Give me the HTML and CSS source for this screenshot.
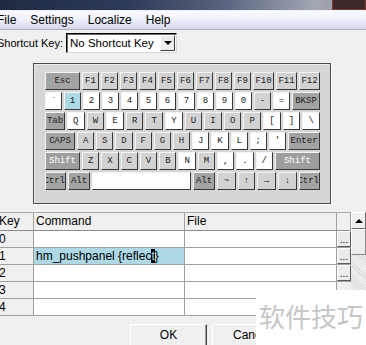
FILE: index.html
```html
<!DOCTYPE html>
<html lang="en">
<head>
  <meta charset="UTF-8">
  <title>Keyboard Mapping</title>
  <link rel="stylesheet" href="styles.css">
</head>
<body>
  <div class="titlebar"><span class="close-box"></span></div>

  <div class="menubar">
    <span class="menu-item first">File</span>
    <span class="menu-item">Settings</span>
    <span class="menu-item">Localize</span>
    <span class="menu-item">Help</span>
  </div>

  <div class="shortcut-row">
    <label class="shortcut-label">Shortcut Key:</label>
    <div class="select">
      <span class="select-text">No Shortcut Key</span>
      <span class="select-btn"><span class="arrow-down"></span></span>
    </div>
  </div>

  <div class="kbd-frame">
    <div class="krow">
      <span class="key dk w35">Esc</span>
      <span class="key lt w17">F1</span>
      <span class="key lt w17">F2</span>
      <span class="key lt w17">F3</span>
      <span class="key lt w17">F4</span>
      <span class="key lt w17">F5</span>
      <span class="key lt w17">F6</span>
      <span class="key lt w17">F7</span>
      <span class="key lt w17">F8</span>
      <span class="key lt w17">F9</span>
      <span class="key lt w21">F10</span>
      <span class="key lt w21">F11</span>
      <span class="key lt w21">F12</span>
    </div>
    <div class="krow">
      <span class="key w17">`</span>
      <span class="key sel w17">1</span>
      <span class="key w17">2</span>
      <span class="key w17">3</span>
      <span class="key w17">4</span>
      <span class="key w17">5</span>
      <span class="key w17">6</span>
      <span class="key w17">7</span>
      <span class="key w17">8</span>
      <span class="key w17">9</span>
      <span class="key w17">0</span>
      <span class="key lt w17">-</span>
      <span class="key w17">=</span>
      <span class="key dk w28">BKSP</span>
    </div>
    <div class="krow">
      <span class="key dk w20">Tab</span>
      <span class="key flex">Q</span>
      <span class="key lt flex">W</span>
      <span class="key flex">E</span>
      <span class="key lt flex">R</span>
      <span class="key lt flex">T</span>
      <span class="key flex">Y</span>
      <span class="key lt flex">U</span>
      <span class="key lt flex">I</span>
      <span class="key lt flex">O</span>
      <span class="key lt flex">P</span>
      <span class="key flex">[</span>
      <span class="key flex">]</span>
      <span class="key flex">\</span>
    </div>
    <div class="krow">
      <span class="key dk w30">CAPS</span>
      <span class="key lt flex">A</span>
      <span class="key lt flex">S</span>
      <span class="key lt flex">D</span>
      <span class="key lt flex">F</span>
      <span class="key lt flex">G</span>
      <span class="key lt flex">H</span>
      <span class="key flex">J</span>
      <span class="key flex">K</span>
      <span class="key flex">L</span>
      <span class="key flex">;</span>
      <span class="key flex">'</span>
      <span class="key dk w32">Enter</span>
    </div>
    <div class="krow">
      <span class="key sh w35">Shift</span>
      <span class="key lt flex">Z</span>
      <span class="key lt flex">X</span>
      <span class="key lt flex">C</span>
      <span class="key lt flex">V</span>
      <span class="key lt flex">B</span>
      <span class="key flex">N</span>
      <span class="key lt flex">M</span>
      <span class="key flex">,</span>
      <span class="key flex">.</span>
      <span class="key flex">/</span>
      <span class="key sh w45">Shift</span>
    </div>
    <div class="krow">
      <span class="key dk w21 clip">Ctrl</span>
      <span class="key dk w22">Alt</span>
      <span class="key w99"></span>
      <span class="key dk w22">Alt</span>
      <span class="key lt w19">~</span>
      <span class="key lt w17">&uarr;</span>
      <span class="key lt w19">&rarr;</span>
      <span class="key lt w19">&darr;</span>
      <span class="key dk w21 clip">Ctrl</span>
    </div>
  </div>

  <div class="grid-wrap">
    <div class="grid">
      <div class="cell head keycol">Key</div>
      <div class="cell head">Command</div>
      <div class="cell head">File</div>
      <div class="cell head"></div>

      <div class="cell keycol">0</div>
      <div class="cell"></div>
      <div class="cell"></div>
      <div class="cell btncol"><span class="dots">...</span></div>

      <div class="cell keycol">1</div>
      <div class="cell selected">hm_pushpanel {reflec<span class="caret">t</span>}</div>
      <div class="cell"></div>
      <div class="cell btncol"><span class="dots">...</span></div>

      <div class="cell keycol">2</div>
      <div class="cell"></div>
      <div class="cell"></div>
      <div class="cell btncol"><span class="dots">...</span></div>

      <div class="cell keycol">3</div>
      <div class="cell"></div>
      <div class="cell"></div>
      <div class="cell btncol"></div>

      <div class="cell keycol">4</div>
      <div class="cell"></div>
      <div class="cell"></div>
      <div class="cell btncol"></div>
    </div>
    <div class="vscroll">
      <div class="scroll-btn"><span class="arrow-up"></span></div>
      <div class="scroll-thumb"></div>
      <div class="scroll-track"></div>
    </div>
  </div>

  <div class="actions">
    <button class="btn">OK</button>
    <button class="btn cancel">Canc</button>
  </div>

  <div class="watermark">软件技巧</div>
</body>
</html>
```

FILE: styles.css
```css
body {
  margin: 0;
  width: 366px;
  height: 345px;
  overflow: hidden;
  position: relative;
  background-color: #f0f0f0;
  font-family: "Liberation Sans", Arial, sans-serif;
  font-size: 12px;
  color: #000;
}

.titlebar {
  height: 10px;
  position: relative;
  background: linear-gradient(to right, #1f2a42, #2e3a58 35%, #57617c 60%, #a2a7b3 86%, #8d919b);
}
.close-box {
  position: absolute;
  right: 0;
  top: -6px;
  width: 32px;
  height: 14px;
  border: 1px solid #8a3b2c;
  background-color: #3a2a2a;
}

.menubar {
  height: 20px;
  box-sizing: border-box;
  display: flex;
  align-items: center;
  gap: 14px;
  border-top: 1px solid #eef0fa;
  border-bottom: 1px solid #a9adc2;
  background: linear-gradient(#fafbfe, #eff1fa 45%, #d5d9ef);
  font-size: 12px;
}
.menu-item.first {
  margin-left: -3px;
}

.shortcut-row {
  display: flex;
  align-items: center;
  height: 25px;
  font-size: 11px;
  white-space: nowrap;
}
.shortcut-label {
  width: 69px;
  margin-left: -3px;
  flex-shrink: 0;
  white-space: nowrap;
}
.select {
  width: 111px;
  height: 20px;
  box-sizing: border-box;
  border: 1px solid;
  border-color: #000 #d8d8d8 #d8d8d8 #000;
  box-shadow: inset 1px 1px 0 #6a6a6a;
  background-color: #fff;
  display: flex;
  align-items: center;
  flex-shrink: 0;
  font-size: 11.5px;
}
.select-text {
  flex: 1;
  padding-left: 3px;
  white-space: nowrap;
}
.select-btn {
  width: 15px;
  height: 16px;
  margin-right: 1px;
  box-sizing: border-box;
  border: 1px solid;
  border-color: #fff #404040 #404040 #fff;
  background-color: #ececec;
  display: flex;
  align-items: center;
  justify-content: center;
}
.arrow-down {
  width: 0;
  height: 0;
  border-left: 4px solid transparent;
  border-right: 4px solid transparent;
  border-top: 4px solid #000;
}

.kbd-frame {
  margin: 8px 0 0 33px;
  width: 298px;
  height: 141px;
  box-sizing: border-box;
  border: 1px solid #4a4a4a;
  box-shadow: 1px 1px 0 #fff, inset 1px 1px 0 #eaeaea;
  background-color: #d6d6d6;
  padding: 8px 0 0 11px;
}
.krow {
  display: flex;
  gap: 2px;
  width: 275px;
  height: 18px;
  margin-bottom: 2px;
}
.key {
  box-sizing: border-box;
  height: 18px;
  border: 1px solid;
  border-color: #f4f4f4 #383838 #383838 #f4f4f4;
  background-color: #fff;
  display: flex;
  align-items: center;
  justify-content: center;
  font-family: "Liberation Mono", "Courier New", monospace;
  font-size: 9px;
  color: #222;
  overflow: hidden;
  white-space: nowrap;
  flex-shrink: 0;
}
.key.lt { background-color: #d2d2d2; }
.key.dk { background-color: #a3a3a3; }
.key.sh { background-color: #9e9e9e; color: #fff; }
.key.sel { background-color: #add8e6; }
.key.clip { justify-content: flex-end; }
.key.flex { flex: 1; flex-shrink: 1; }
.w17 { width: 17px; }
.w19 { width: 19px; }
.w20 { width: 20px; }
.w21 { width: 21px; }
.w22 { width: 22px; }
.w28 { width: 28px; }
.w30 { width: 30px; }
.w32 { width: 32px; }
.w35 { width: 35px; }
.w45 { width: 45px; }
.w99 { width: 99px; }

.grid-wrap {
  display: flex;
  margin-top: 8px;
}
.grid {
  display: grid;
  grid-template-columns: 34px 151px 152px 14px;
  grid-template-rows: 18px repeat(5, 17px);
  width: 351px;
  border-top: 1px solid #a8a8a8;
}
.cell {
  box-sizing: border-box;
  border-right: 1px solid #a0a0a0;
  border-bottom: 1px solid #a0a0a0;
  background-color: #fff;
  padding-left: 2px;
  line-height: 16px;
  font-size: 12px;
  white-space: nowrap;
  overflow: hidden;
}
.cell.head {
  background-color: #f0f0f0;
  border-bottom-color: #8c8c8c;
  line-height: 17px;
}
.cell.keycol {
  background-color: #f0f0f0;
  padding-left: 0;
  text-indent: -1px;
}
.cell.btncol {
  background-color: #f0f0f0;
  border-right: none;
  padding-left: 0;
}
.cell.selected {
  background-color: #add8e6;
}
.caret {
  background-color: #000;
  color: #add8e6;
}
.dots {
  display: block;
  height: 16px;
  box-sizing: border-box;
  border: 1px solid;
  border-color: #fff #5a5a5a #5a5a5a #fff;
  background-color: #ececec;
  font-size: 10px;
  line-height: 16px;
  text-align: center;
}

.vscroll {
  width: 15px;
  display: flex;
  flex-direction: column;
  background-color: #e6e6e6;
}
.scroll-btn {
  height: 17px;
  box-sizing: border-box;
  border: 1px solid;
  border-color: #fff #6a6a6a #6a6a6a #fff;
  background-color: #f0f0f0;
  display: flex;
  align-items: center;
  justify-content: center;
}
.arrow-up {
  width: 0;
  height: 0;
  border-left: 4px solid transparent;
  border-right: 4px solid transparent;
  border-bottom: 4px solid #000;
}
.scroll-thumb {
  height: 26px;
  box-sizing: border-box;
  border: 1px solid;
  border-color: #fff #8a8a8a #8a8a8a #fff;
  background-color: #eeeeee;
}
.scroll-track {
  flex: 1;
  background-image: repeating-linear-gradient(45deg, #dcdcdc 0 1px, #f2f2f2 1px 2px);
}

.actions {
  display: flex;
  gap: 5px;
  margin-top: 8px;
  padding-left: 130px;
}
.btn {
  width: 77px;
  height: 26px;
  box-sizing: border-box;
  border: 1px solid;
  border-color: #fff #404040 #404040 #fff;
  box-shadow: inset -1px -1px 0 #a0a0a0;
  background-color: #f0f0f0;
  font-family: "Liberation Sans", Arial, sans-serif;
  font-size: 12px;
  padding: 0 0 4px 0;
}
.btn.cancel {
  text-align: left;
  padding-left: 20px;
}

.watermark {
  position: absolute;
  left: 256px;
  top: 290px;
  width: 110px;
  height: 55px;
  background-color: #fff;
  color: #c6c6c6;
  font-family: "Noto Sans CJK SC", sans-serif;
  font-size: 26px;
  line-height: 52px;
  text-align: center;
}
```
